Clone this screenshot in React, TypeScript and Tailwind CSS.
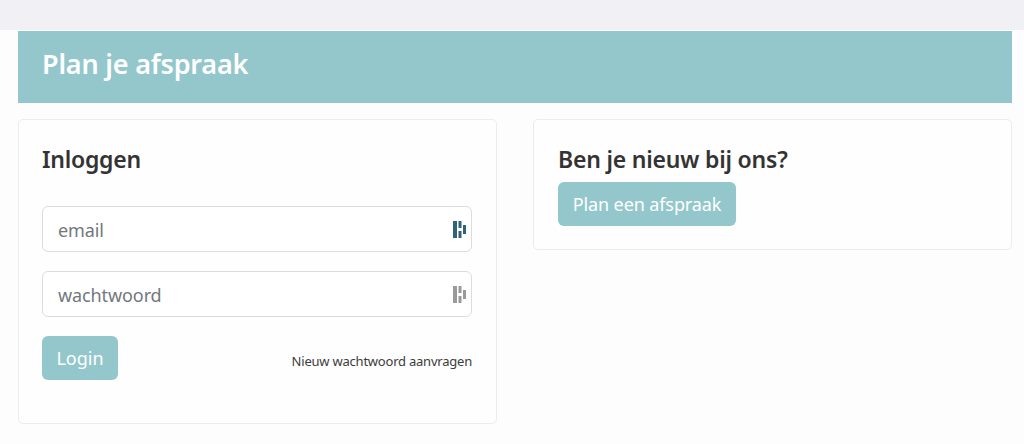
const font = "font-['Noto_Sans','Open_Sans',sans-serif]";

function KeyIcon({ color }: { color: string }) {
  return (
    <svg width="13" height="17" viewBox="0 0 13 17" className="shrink-0" aria-hidden="true">
      <rect x="0" y="0" width="4" height="17" fill={color} />
      <rect x="5.5" y="0" width="3" height="7" fill={color} />
      <rect x="5.5" y="10" width="3" height="7" fill={color} />
      <rect x="10" y="4" width="3" height="9" fill={color} />
    </svg>
  );
}

function Field({ placeholder, color }: { placeholder: string; color: string }) {
  return (
    <div className="h-[46px] flex items-center justify-between rounded-[6px] border border-[#dcdcdc] bg-white pl-[15px] pr-[5px]">
      <span className="pt-[2px] text-[18px] text-[#72787d] tracking-[-0.1px]">{placeholder}</span>
      <KeyIcon color={color} />
    </div>
  );
}

export default function App() {
  return (
    <div className={`${font} h-[444px] w-[1024px] overflow-hidden bg-[#fdfdfd]`}>
      <div className="h-[30px] bg-[#f0f0f5]" />
      <div className="mx-[18px] mt-px w-[994px]">
        <div className="h-[72px] bg-[#93c7cc] pl-[24px] pb-[8px] flex items-center">
          <h1 className="text-[27px] font-semibold text-white leading-none tracking-[-0.2px]">Plan je afspraak</h1>
        </div>
        <div className="mt-[16px] flex items-start justify-between">
          <section className="h-[305px] w-[479px] rounded-[5px] border border-[#ececec] bg-[#fefefe] pl-[23px] pr-[24px] pt-[23px]">
            <h2 className="text-[23px] leading-[32px] font-semibold text-[#333333] tracking-[-0.25px]">Inloggen</h2>
            <div className="mt-[31px] flex flex-col gap-[19px]">
              <Field placeholder="email" color="#2f6478" />
              <Field placeholder="wachtwoord" color="#9a9a9a" />
            </div>
            <div className="mt-[19px] flex items-center justify-between">
              <button className="h-[44px] w-[76px] rounded-[6px] bg-[#93c7cc] text-[18px] text-white">Login</button>
              <a className="mt-[7px] text-[13px] text-[#3c3c3c] tracking-[-0.22px]">Nieuw wachtwoord aanvragen</a>
            </div>
          </section>
          <section className="h-[131px] w-[479px] rounded-[5px] border border-[#ececec] bg-[#fefefe] px-[24px] pt-[23px]">
            <h2 className="text-[23px] leading-[32px] font-semibold text-[#333333] tracking-[-0.2px]">Ben je nieuw bij ons?</h2>
            <button className="mt-[7px] h-[44px] w-[178px] rounded-[6px] bg-[#93c7cc] text-[18px] text-white tracking-[-0.1px]">Plan een afspraak</button>
          </section>
        </div>
      </div>
    </div>
  );
}
